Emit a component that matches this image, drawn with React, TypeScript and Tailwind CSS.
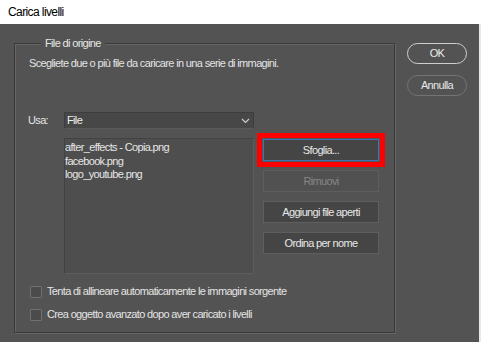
import React from "react";

const font = { fontFamily: '"Liberation Sans", Arial, sans-serif', letterSpacing: "-0.65px" };

function Btn({ children, disabled, focus }: { children: React.ReactNode; disabled?: boolean; focus?: boolean }) {
  return (
    <div
      className={
        "h-[22px] w-[116px] flex items-center justify-center text-[11px] border " +
        (focus
          ? "border-[#3d74b8] bg-[#454545] text-[#e8e8e8]"
          : disabled
          ? "border-[#5e5e5e] bg-[#515151] text-[#858585]"
          : "border-[#5f5f5f] bg-[#454545] text-[#e8e8e8]")
      }
    >
      {children}
    </div>
  );
}

function Check({ label }: { label: string }) {
  return (
    <div className="flex items-center h-[13px]">
      <div className="w-[12px] h-[12px] border border-[#707070] bg-[#4b4b4b] rounded-[1px]" />
      <span className="ml-[5px] text-[11px] text-[#e4e4e4] leading-[13px]">{label}</span>
    </div>
  );
}

export default function App() {
  return (
    <div className="w-[481px] h-[342px] bg-[#535353] flex flex-col overflow-hidden" style={font}>
      <div className="h-[24px] bg-white flex items-center pl-[8px] text-[12px] text-black shrink-0 tracking-[-0.6px]">
        Carica livelli
      </div>
      <div className="flex-1 flex border-r-2 border-[#e9e9e9]">
        <fieldset className="ml-[14px] mt-[11px] w-[381px] h-[298px] border border-[#3a3a3a] shadow-[inset_1px_1px_0_#656565,1px_1px_0_#656565] pl-[14px] flex flex-col">
          <legend className="ml-[12px] px-[4px] text-[11px] text-[#e6e6e6] leading-[16px] bg-[#535353]">
            File di origine
          </legend>
          <div className="mt-[4px] text-[11px] text-[#e4e4e4] leading-[16px]">
            Scegliete due o più file da caricare in una serie di immagini.
          </div>
          <div className="mt-[41px] flex items-center -ml-[1px]">
            <span className="w-[36px] text-[11px] text-[#e4e4e4]">Usa:</span>
            <div className="w-[190px] h-[17px] bg-[#474747] border border-[#3d3d3d] border-b-[#5a5a5a] flex items-center justify-between pl-[2px] pr-[3px] text-[11px] text-[#f0f0f0]">
              <span>File</span>
              <svg width="9" height="6" viewBox="0 0 9 6">
                <path d="M1 1 L4.5 4.5 L8 1" stroke="#cfcfcf" strokeWidth="1.2" fill="none" />
              </svg>
            </div>
          </div>
          <div className="mt-[9px] flex">
            <div className="ml-[35px] w-[190px] h-[136px] bg-[#4e4e4e] border border-[#424242] border-r-[#5c5c5c] border-b-[#5c5c5c] text-[11px] text-[#e6e6e6] leading-[13.5px] pt-[2px]">
              <div>after_effects - Copia.png</div>
              <div>facebook.png</div>
              <div>logo_youtube.png</div>
            </div>
            <div className="ml-[9px] flex flex-col gap-[9px] pt-[1px]">
              <div className="outline-[5px] outline outline-[#ff0000] outline-offset-[1px]">
                <Btn focus>Sfoglia...</Btn>
              </div>
              <Btn disabled>Rimuovi</Btn>
              <Btn>Aggiungi file aperti</Btn>
              <Btn>Ordina per nome</Btn>
            </div>
          </div>
          <div className="mt-[11px] ml-[1px] flex flex-col gap-[10px]">
            <Check label="Tenta di allineare automaticamente le immagini sorgente" />
            <Check label="Crea oggetto avanzato dopo aver caricato i livelli" />
          </div>
        </fieldset>
        <div className="ml-[12px] mt-[19px] flex flex-col gap-[11px]">
          <div className="w-[60px] h-[21px] rounded-full border-[1.5px] border-[#cfcfcf] flex items-center justify-center text-[11px] text-[#ececec]">
            OK
          </div>
          <div className="w-[60px] h-[21px] rounded-full border-[1.5px] border-[#747474] flex items-center justify-center text-[11px] text-[#e6e6e6]">
            Annulla
          </div>
        </div>
      </div>
    </div>
  );
}
